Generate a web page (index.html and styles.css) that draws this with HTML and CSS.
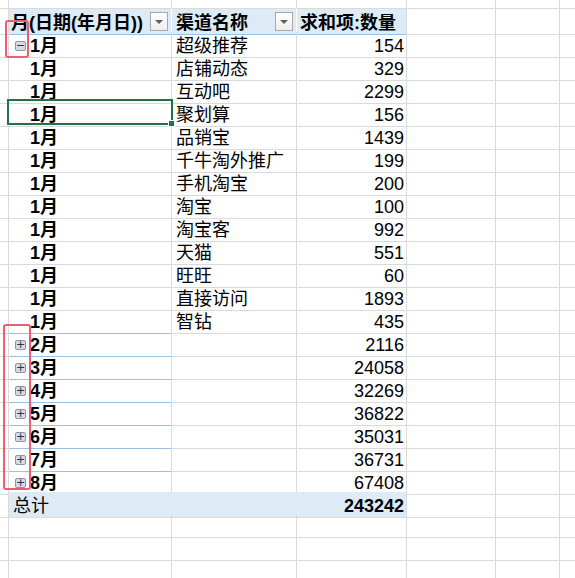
FILE: index.html
```html
<!DOCTYPE html>
<html>
<head>
<meta charset="utf-8">
<link rel="stylesheet" href="styles.css">
</head>
<body>
<div class="sheet">
  <div class="row top"><span class="c"></span><span class="c"></span><span class="c"></span><span class="c"></span><span class="c"></span><span class="c"></span><span class="c"></span></div>

  <div class="row"><span class="c"></span><span class="c h hw sb"><span class="ht">月(日期(年月日))</span><span class="dd"></span></span><span class="c h hw sb"><span class="ht t2">渠道名称</span><span class="dd"></span></span><span class="c h"><span class="ht t3">求和项:数量</span></span><span class="c"></span><span class="c"></span><span class="c"></span></div>

  <div class="row"><span class="c"></span><span class="c m"><span class="tg">−</span><b>1月</b></span><span class="c t2">超级推荐</span><span class="c num">154</span><span class="c"></span><span class="c"></span><span class="c"></span></div>
  <div class="row"><span class="c"></span><span class="c m ind"><b>1月</b></span><span class="c t2">店铺动态</span><span class="c num">329</span><span class="c"></span><span class="c"></span><span class="c"></span></div>
  <div class="row"><span class="c"></span><span class="c m ind"><b>1月</b></span><span class="c t2">互动吧</span><span class="c num">2299</span><span class="c"></span><span class="c"></span><span class="c"></span></div>
  <div class="row"><span class="c"></span><span class="c m ind sel"><b>1月</b></span><span class="c t2">聚划算</span><span class="c num">156</span><span class="c"></span><span class="c"></span><span class="c"></span></div>
  <div class="row"><span class="c"></span><span class="c m ind"><b>1月</b></span><span class="c t2">品销宝</span><span class="c num">1439</span><span class="c"></span><span class="c"></span><span class="c"></span></div>
  <div class="row"><span class="c"></span><span class="c m ind"><b>1月</b></span><span class="c t2">千牛淘外推广</span><span class="c num">199</span><span class="c"></span><span class="c"></span><span class="c"></span></div>
  <div class="row"><span class="c"></span><span class="c m ind"><b>1月</b></span><span class="c t2">手机淘宝</span><span class="c num">200</span><span class="c"></span><span class="c"></span><span class="c"></span></div>
  <div class="row"><span class="c"></span><span class="c m ind"><b>1月</b></span><span class="c t2">淘宝</span><span class="c num">100</span><span class="c"></span><span class="c"></span><span class="c"></span></div>
  <div class="row"><span class="c"></span><span class="c m ind"><b>1月</b></span><span class="c t2">淘宝客</span><span class="c num">992</span><span class="c"></span><span class="c"></span><span class="c"></span></div>
  <div class="row"><span class="c"></span><span class="c m ind"><b>1月</b></span><span class="c t2">天猫</span><span class="c num">551</span><span class="c"></span><span class="c"></span><span class="c"></span></div>
  <div class="row"><span class="c"></span><span class="c m ind"><b>1月</b></span><span class="c t2">旺旺</span><span class="c num">60</span><span class="c"></span><span class="c"></span><span class="c"></span></div>
  <div class="row"><span class="c"></span><span class="c m ind"><b>1月</b></span><span class="c t2">直接访问</span><span class="c num">1893</span><span class="c"></span><span class="c"></span><span class="c"></span></div>
  <div class="row"><span class="c"></span><span class="c m ind bb"><b>1月</b></span><span class="c t2">智钻</span><span class="c num">435</span><span class="c"></span><span class="c"></span><span class="c"></span></div>

  <div class="row"><span class="c"></span><span class="c m bb"><span class="tg">+</span><b>2月</b></span><span class="c"></span><span class="c num">2116</span><span class="c"></span><span class="c"></span><span class="c"></span></div>
  <div class="row"><span class="c"></span><span class="c m bb"><span class="tg">+</span><b>3月</b></span><span class="c"></span><span class="c num">24058</span><span class="c"></span><span class="c"></span><span class="c"></span></div>
  <div class="row"><span class="c"></span><span class="c m bb"><span class="tg">+</span><b>4月</b></span><span class="c"></span><span class="c num">32269</span><span class="c"></span><span class="c"></span><span class="c"></span></div>
  <div class="row"><span class="c"></span><span class="c m bb"><span class="tg">+</span><b>5月</b></span><span class="c"></span><span class="c num">36822</span><span class="c"></span><span class="c"></span><span class="c"></span></div>
  <div class="row"><span class="c"></span><span class="c m bb"><span class="tg">+</span><b>6月</b></span><span class="c"></span><span class="c num">35031</span><span class="c"></span><span class="c"></span><span class="c"></span></div>
  <div class="row"><span class="c"></span><span class="c m bb"><span class="tg">+</span><b>7月</b></span><span class="c"></span><span class="c num">36731</span><span class="c"></span><span class="c"></span><span class="c"></span></div>
  <div class="row"><span class="c"></span><span class="c m bb"><span class="tg">+</span><b>8月</b></span><span class="c bb"></span><span class="c num bb">67408</span><span class="c"></span><span class="c"></span><span class="c"></span></div>

  <div class="row"><span class="c"></span><span class="c tot tw tl">总计</span><span class="c tot tw"></span><span class="c tot num"><b>243242</b></span><span class="c"></span><span class="c"></span><span class="c"></span></div>

  <div class="row"><span class="c"></span><span class="c"></span><span class="c"></span><span class="c"></span><span class="c"></span><span class="c"></span><span class="c"></span></div>
  <div class="row"><span class="c"></span><span class="c"></span><span class="c"></span><span class="c"></span><span class="c"></span><span class="c"></span><span class="c"></span></div>
  <div class="row"><span class="c"></span><span class="c"></span><span class="c"></span><span class="c"></span><span class="c"></span><span class="c"></span><span class="c"></span></div>

  <div class="mark mark1"></div>
  <div class="mark mark2"></div>
</div>
</body>
</html>
```

FILE: styles.css
```css
html, body {
  margin: 0;
  padding: 0;
  background: #ffffff;
}

body {
  font-family: "Liberation Sans", "Noto Sans CJK SC", sans-serif;
  font-size: 18px;
  color: #000;
  overflow: hidden;
}

.sheet {
  position: relative;
  width: 575px;
  height: 578px;
  overflow: hidden;
}

.row {
  display: grid;
  grid-template-columns: 9px 163px 125px 110px 89px 64px 40px;
  height: 23px;
}

.row.top {
  height: 9px;
}

.c {
  box-sizing: border-box;
  border-right: 1px solid #dadada;
  border-bottom: 1px solid #dadada;
  display: flex;
  align-items: center;
  white-space: nowrap;
  overflow: visible;
  line-height: 22px;
  padding-top: 3px;
  min-width: 0;
}

.row.top .c {
  padding-top: 0;
}

.h {
  background: #ddebf7;
  border-bottom-color: #9bc2e6;
  font-weight: bold;
}

.hw {
  border-right-color: #ffffff;
}

.sb {
  justify-content: space-between;
}

.ht {
  padding-left: 2px;
}

.ht.t2 {
  padding-left: 4px;
}

.ht.t3 {
  padding-left: 3px;
}

.t2 {
  padding-left: 4px;
}

.num {
  justify-content: flex-end;
  padding-right: 2px;
}

.m {
  padding-left: 6px;
}

.m.ind {
  padding-left: 21px;
}

.m b {
  font-weight: bold;
}

.bb {
  border-bottom-color: #9bc2e6;
}

.tot {
  background: #ddebf7;
}

.tw {
  border-right-color: #ddebf7;
}

.tl {
  padding-left: 4px;
}

.tot b {
  font-weight: bold;
}

.dd {
  box-sizing: border-box;
  width: 18px;
  height: 19px;
  margin-right: 3px;
  margin-top: -3px;
  border: 1px solid #a9a9a9;
  background: linear-gradient(#ffffff, #eeeeee);
  position: relative;
  flex: none;
}

.dd::after {
  content: "";
  position: absolute;
  left: 4px;
  top: 7px;
  border-left: 4px solid transparent;
  border-right: 4px solid transparent;
  border-top: 4px solid #5f5f5f;
}

.tg {
  box-sizing: border-box;
  width: 11px;
  height: 10px;
  margin-right: 4px;
  border: 1px solid #8995a8;
  border-radius: 2px;
  background: #d6dbe3;
  color: #2a3344;
  font-size: 11px;
  line-height: 8px;
  text-align: center;
  font-family: "DejaVu Sans", sans-serif;
  flex: none;
}

.sel {
  position: relative;
}

.sel::after {
  content: "";
  position: absolute;
  left: -2px;
  top: -2px;
  width: 166px;
  height: 26px;
  box-sizing: border-box;
  border: 2px solid #217346;
  pointer-events: none;
}

.sel::before {
  content: "";
  position: absolute;
  left: 159px;
  top: 19px;
  width: 5px;
  height: 5px;
  background: #217346;
  border: 1px solid #ffffff;
  z-index: 2;
}

.mark {
  position: absolute;
  box-sizing: border-box;
  border: 2px solid #ef5d75;
  border-radius: 3px;
}

.mark1 {
  left: 5px;
  top: 20px;
  width: 24px;
  height: 38px;
}

.mark2 {
  left: 3px;
  top: 324px;
  width: 28px;
  height: 166px;
}
```
